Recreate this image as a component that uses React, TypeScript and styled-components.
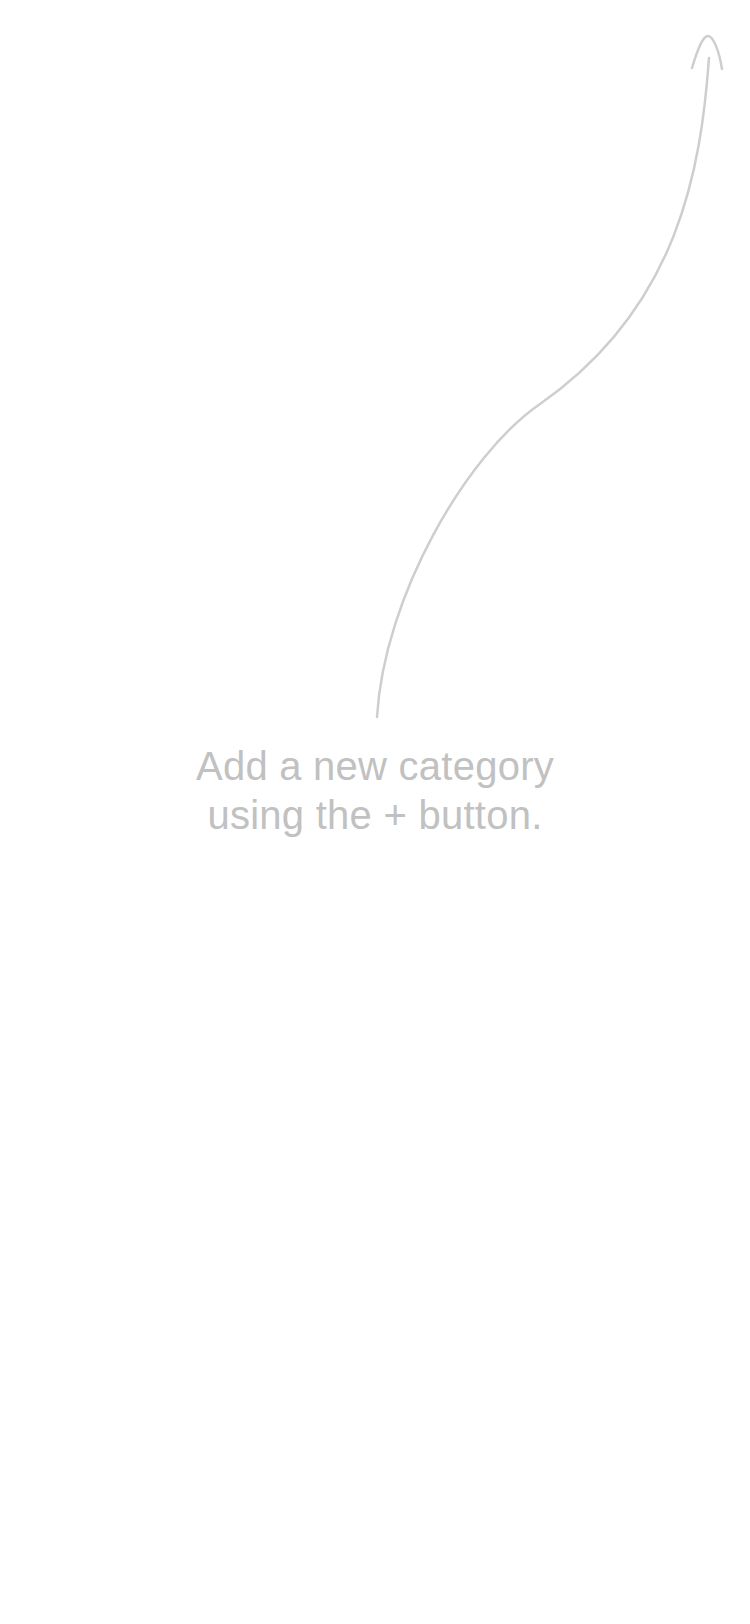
import React from "react";
import styled, { createGlobalStyle } from "styled-components";

const GlobalStyle = createGlobalStyle`
  html, body {
    margin: 0;
    padding: 0;
    background: #ffffff;
  }
  body {
    font-family: "Liberation Sans", Arial, Helvetica, sans-serif;
  }
`;

const Screen = styled.main`
  width: 750px;
  min-height: 1624px;
  background: #ffffff;
  display: flex;
  flex-direction: column;
  align-items: center;
`;

const Hint = styled.svg`
  display: block;
  width: 750px;
  height: 720px;
  flex: none;
`;

const Message = styled.p`
  margin: 22px 0 0;
  width: 100%;
  text-align: center;
  font-family: "Liberation Sans", Arial, Helvetica, sans-serif;
  font-size: 40px;
  line-height: 49px;
  letter-spacing: 0.25px;
  color: #c1c1c1;
`;

export default function App() {
  return (
    <>
      <GlobalStyle />
      <Screen>
        <Hint viewBox="0 0 750 720" aria-hidden="true">
          <g fill="none" stroke="#cecece" strokeWidth={2.5} strokeLinecap="round">
            <path d="M377,717 C384,597 466,455 540,404 C679,307 701,168 709,58" />
            <path d="M692,68 C698,48 703,36 708,36 C713,36 719,50 722,69" />
          </g>
        </Hint>
        <Message>
          Add a new category
          <br />
          using the + button.
        </Message>
      </Screen>
    </>
  );
}
